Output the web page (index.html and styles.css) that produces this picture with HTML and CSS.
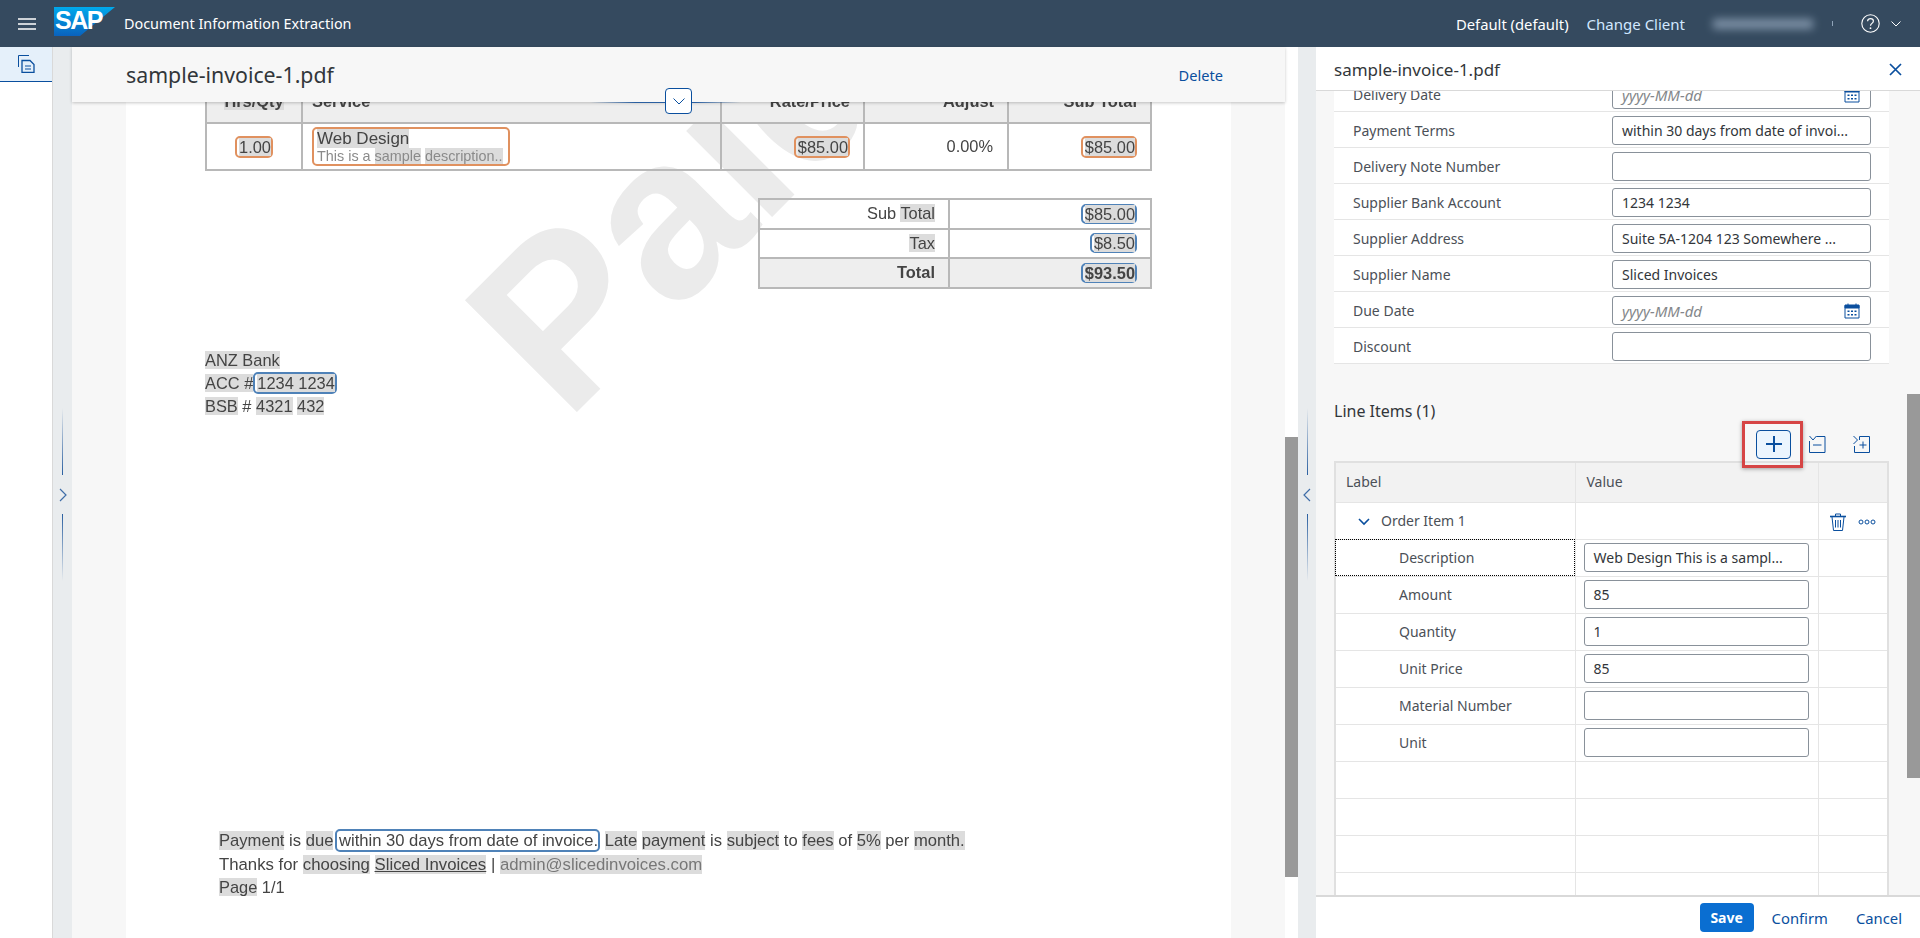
FILE: index.html
```html
<!DOCTYPE html>
<html lang="en">
<head>
<meta charset="utf-8">
<title>Document Information Extraction</title>
<link rel="stylesheet" href="styles.css">
</head>
<body>
<header class="shell">
  <svg class="burger" width="18" height="12" viewBox="0 0 18 12"><path d="M0 1h18M0 6h18M0 11h18" stroke="#fff" stroke-width="1.6"/></svg>
  <svg class="logo" width="61" height="29" viewBox="0 0 61 29">
    <defs><linearGradient id="sap" x1="0" y1="0" x2="0" y2="1"><stop offset="0" stop-color="#00a9ec"/><stop offset="1" stop-color="#0a62bd"/></linearGradient></defs>
    <polygon points="0,0 61,0 26,29 0,29" fill="url(#sap)"/>
    <text x="1" y="22" class="logo-text">SAP</text>
  </svg>
  <span class="app-title">Document Information Extraction</span>
  <span class="spacer"></span>
  <span class="client">Default (default)</span>
  <span class="change">Change Client</span>
  <span class="blurred" aria-hidden="true"></span>
  <span class="tick"></span>
  <svg class="help" width="19" height="19" viewBox="0 0 19 19"><circle cx="9.5" cy="9.5" r="8.7" fill="none" stroke="#fff" stroke-width="1.1"/><path d="M6.6 7.3c0-1.7 1.3-2.7 2.9-2.7s2.9 1 2.9 2.5c0 2.3-2.9 2.3-2.9 4.6" fill="none" stroke="#fff" stroke-width="1.2"/><circle cx="9.5" cy="14.2" r=".9" fill="#fff"/></svg>
  <svg class="caret" width="10" height="6" viewBox="0 0 10 6"><path d="M.5.5 5 5 9.5.5" fill="none" stroke="#fff"/></svg>
</header>

<main class="workspace">
  <nav class="rail">
    <div class="rail-tab">
      <svg width="17" height="18" viewBox="0 0 17 18" fill="none" stroke="#0a4f9e"><path d="M.5 12V.5H11"/><path d="M4 5.500h8l4 4v8H4z" stroke-width="1.300"/><path d="M7 11h6M7 14h6"/></svg>
    </div>
  </nav>

  <div class="splitter splitter-left">
    <span class="grip grip-up"></span>
    <svg class="grip-arrow" width="8" height="14" viewBox="0 0 8 14"><path d="M1 1l6 6-6 6" fill="none" stroke="#3f6ea8" stroke-width="1.200"/></svg>
    <span class="grip grip-down"></span>
  </div>

  <section class="doc-pane">
    <div class="doc-head">
      <h1 class="doc-title">sample-invoice-1.pdf</h1>
      <span class="link">Delete</span>
      <span class="collapse-line"></span>
      <button class="collapse-btn"><svg width="12" height="7" viewBox="0 0 12 7"><path d="M.5.500 6 6l5.500-5.500" fill="none" stroke="#0a4f9e"/></svg></button>
    </div>
    <div class="viewer">
      <div class="page">
        <svg class="watermark" width="1105" height="836"><text x="440" y="321" transform="rotate(-45 440 321)" class="watermark-text">Paid</text></svg>
        <div class="pdf">
          <table class="inv">
            <colgroup><col class="c1"><col class="c2"><col class="c3"><col class="c4"><col class="c5"></colgroup>
            <tr class="inv-head"><th class="ctr"><span class="hl">Hrs/Qty</span></th><th class="lft">Service</th><th>Rate/Price</th><th>Adjust</th><th>Sub Total</th></tr>
            <tr class="inv-row">
              <td class="ctr"><span class="box orange"><span class="hl">1.00</span></span></td>
              <td class="lft"><span class="box orange desc"><span class="hl big">Web Design</span><br><span class="small">This is a <span class="hl">sample</span> <span class="hl">description..</span></span></span></td>
              <td><span class="box orange"><span class="hl">$85.00</span></span></td>
              <td><span class="plain">0.00%</span></td>
              <td><span class="box orange"><span class="hl">$85.00</span></span></td>
            </tr>
          </table>
          <table class="totals">
            <tr><td class="t-label">Sub <span class="hl">Total</span></td><td><span class="box blue"><span class="hl">$85.00</span></span></td></tr>
            <tr><td class="t-label"><span class="hl">Tax</span></td><td><span class="box blue"><span class="hl">$8.50</span></span></td></tr>
            <tr class="grand"><td class="t-label">Total</td><td><span class="box blue"><span class="hl">$93.50</span></span></td></tr>
          </table>
          <div class="bank">
            <div><span class="hl">ANZ Bank</span></div>
            <div><span class="hl">ACC #</span><span class="box blue"><span class="hl">1234 1234</span></span></div>
            <div><span class="hl">BSB</span> # <span class="hl">4321</span> <span class="hl">432</span></div>
          </div>
          <div class="notes">
            <div class="note-a"><span class="hl">Payment</span> is <span class="hl">due</span> <span class="box blue wide">within 30 days from date of invoice.</span> <span class="hl">Late</span> <span class="hl">payment</span> is <span class="hl">subject</span> to <span class="hl">fees</span> of <span class="hl">5%</span> per <span class="hl">month.</span></div>
            <div class="note-b">Thanks for <span class="hl">choosing</span> <span class="under hl">Sliced Invoices</span> | <span class="hl mail">admin@slicedinvoices.com</span></div>
            <div><span class="hl">Page</span> 1/1</div>
          </div>
        </div>
      </div>
    </div>
  </section>

  <div class="doc-scroll"><span class="doc-thumb"></span></div>

  <div class="splitter splitter-right">
    <span class="grip grip-up"></span>
    <svg class="grip-arrow" width="8" height="14" viewBox="0 0 8 14"><path d="M7 1 1 7l6 6" fill="none" stroke="#3f6ea8" stroke-width="1.200"/></svg>
    <span class="grip grip-down"></span>
  </div>

  <aside class="side">
    <div class="side-head">
      <h2 class="side-title">sample-invoice-1.pdf</h2>
      <svg width="13" height="13" viewBox="0 0 13 13"><path d="M1 1l11 11M12 1 1 12" stroke="#0a4f9e" stroke-width="1.700"/></svg>
    </div>
    <div class="side-scroll">
      <div class="side-content">
        <div class="form">
          <div class="row"><label>Delivery Date</label><div class="field ph">yyyy-MM-dd<svg class="cal" width="16" height="16" viewBox="0 0 16 16"><path d="M1 2.500h14V15H1z" fill="none" stroke="#0a4f9e"/><path d="M1 2h14v3H1zM4 .5v2M12 .5v2" fill="#0a4f9e" stroke="#0a4f9e"/><path d="M3.500 7.500h2v1.500h-2zM7 7.500h2v1.500H7zM10.500 7.500h2v1.500h-2zM3.500 11h2v1.500h-2zM7 11h2v1.500H7zM10.500 11h2v1.500h-2z" fill="#0a4f9e"/></svg></div></div>
          <div class="row"><label>Payment Terms</label><div class="field">within 30 days from date of invoi...</div></div>
          <div class="row"><label>Delivery Note Number</label><div class="field"></div></div>
          <div class="row"><label>Supplier Bank Account</label><div class="field">1234 1234</div></div>
          <div class="row"><label>Supplier Address</label><div class="field">Suite 5A-1204 123 Somewhere ...</div></div>
          <div class="row"><label>Supplier Name</label><div class="field">Sliced Invoices</div></div>
          <div class="row"><label>Due Date</label><div class="field ph">yyyy-MM-dd<svg class="cal" width="16" height="16" viewBox="0 0 16 16"><path d="M1 2.500h14V15H1z" fill="none" stroke="#0a4f9e"/><path d="M1 2h14v3H1zM4 .5v2M12 .5v2" fill="#0a4f9e" stroke="#0a4f9e"/><path d="M3.500 7.500h2v1.500h-2zM7 7.500h2v1.500H7zM10.500 7.500h2v1.500h-2zM3.500 11h2v1.500h-2zM7 11h2v1.500H7zM10.500 11h2v1.500h-2z" fill="#0a4f9e"/></svg></div></div>
          <div class="row"><label>Discount</label><div class="field"></div></div>
        </div>

        <h3 class="items-title">Line Items (1)</h3>
        <div class="toolbar">
          <div class="add-wrap">
            <span class="callout"></span>
            <button class="add"><svg width="16" height="16" viewBox="0 0 16 16"><path d="M8 0v16M0 8h16" stroke="#0a4f9e" stroke-width="2"/></svg></button>
          </div>
          <svg class="tool-a" width="17" height="17" viewBox="0 0 17 17" fill="none" stroke="#0a4f9e"><path d="M.5 5v11.500h15.500V.5H7.500"/><path d="M.5 0 4 4 7.500 0"/><path d="M4 9h8.500"/></svg>
          <svg class="tool-b" width="17" height="17" viewBox="0 0 17 17" fill="none" stroke="#0a4f9e"><path d="M1.500 10v6.500h15V.5H6.500V4"/><path d="M.5 0 4.500 4 .5 8"/><path d="M6.500 9h7M10 5.500v7"/></svg>
        </div>
        <table class="items">
          <colgroup><col class="i1"><col class="i2"><col class="i3"></colgroup>
          <tr class="items-head"><th>Label</th><th>Value</th><th></th></tr>
          <tr><td class="group"><svg width="12" height="8" viewBox="0 0 12 8"><path d="M1 1l5 5 5-5" fill="none" stroke="#0a4f9e" stroke-width="1.600"/></svg>Order Item 1</td><td></td>
            <td class="acts"><svg width="16" height="18" viewBox="0 0 16 18" fill="none" stroke="#0a4f9e"><path d="M0 3.500h16" stroke-width="1.600"/><path d="M5.500 3V1h5v2"/><path d="M2 4l1.500 13.500h9L14 4"/><path d="M5.500 7v7.500M8 7v7.500M10.500 7v7.500"/></svg><svg width="18" height="6" viewBox="0 0 18 6" fill="none" stroke="#0a4f9e"><circle cx="3" cy="3" r="2"/><circle cx="9" cy="3" r="2"/><circle cx="15" cy="3" r="2"/></svg></td></tr>
          <tr><td class="child focus">Description</td><td class="val"><div class="field">Web Design This is a sampl...</div></td><td></td></tr>
          <tr><td class="child">Amount</td><td class="val"><div class="field">85</div></td><td></td></tr>
          <tr><td class="child">Quantity</td><td class="val"><div class="field">1</div></td><td></td></tr>
          <tr><td class="child">Unit Price</td><td class="val"><div class="field">85</div></td><td></td></tr>
          <tr><td class="child">Material Number</td><td class="val"><div class="field"></div></td><td></td></tr>
          <tr><td class="child">Unit</td><td class="val"><div class="field"></div></td><td></td></tr>
          <tr><td></td><td></td><td></td></tr>
          <tr><td></td><td></td><td></td></tr>
          <tr><td></td><td></td><td></td></tr>
          <tr><td></td><td></td><td></td></tr>
        </table>
      </div>
      <span class="side-thumb"></span>
    </div>
    <div class="side-foot">
      <button class="save">Save</button>
      <span class="link">Confirm</span>
      <span class="link">Cancel</span>
    </div>
  </aside>
</main>
</body>
</html>
```

FILE: styles.css
```css
* { box-sizing: border-box; }
html, body { height: 100%; }
body {
  margin: 0;
  height: 938px;
  overflow: hidden;
  display: flex;
  flex-direction: column;
  font-family: "Noto Sans", "Open Sans", sans-serif;
  font-size: 14px;
  color: #32363a;
  background: #fff;
}
h1, h2, h3 { margin: 0; font-weight: 400; }

/* Shell bar */
.shell {
  height: 47px;
  flex: none;
  background: #354a5f;
  display: flex;
  align-items: center;
  color: #fff;
  padding-left: 18px;
}
.burger { margin-right: 18px; }
.logo { margin-right: 9px; margin-top: -4px; }
.logo-text { font: bold 25px "Liberation Sans", sans-serif; fill: #fff; letter-spacing: -1.500px; }
.app-title { font-size: 14.400px; }
.spacer { flex: 1; }
.client { font-size: 14.800px; }
.change { color: #d1e8ff; margin-left: 18px; font-size: 15px; }
.blurred { width: 100px; height: 10px; background: #8fa3b8; filter: blur(4px); margin-left: 28px; opacity: .8; }
.tick { width: 1px; height: 5px; background: #8fa3b8; margin-left: 19px; }
.help { margin-left: 28px; }
.caret { margin-left: 11px; margin-right: 19px; }

/* Layout */
.workspace { flex: 1; display: flex; min-height: 0; }
.rail { width: 53px; flex: none; background: #fff; border-right: 1px solid #d9d9d9; }
.rail-tab {
  height: 35px;
  background: #e5f0fa;
  border-bottom: 1px solid #0a4f9e;
  display: flex;
  justify-content: center;
  align-items: center;
}
.splitter {
  flex: none;
  display: flex;
  flex-direction: column;
  align-items: center;
  background: #e9ecee;
  padding-top: 361px;
}
.splitter-left { width: 19px; }
.splitter-right { width: 18px; }
.grip { width: 1px; height: 67px; }
.grip-up { background: linear-gradient(to bottom, transparent, #2a5fa0); }
.grip-down { background: linear-gradient(to top, transparent, #2a5fa0); }
.grip-arrow { margin: 13px 0 12px; }

/* Document */
.doc-pane { width: 1213px; flex: none; display: flex; flex-direction: column; background: #f7f7f7; position: relative; min-height: 0; }
.doc-head {
  height: 55px;
  flex: none;
  background: #f7f7f7;
  padding: 0 62px 0 54px;
  display: flex;
  align-items: center;
  justify-content: space-between;
  position: relative;
  z-index: 2;
  box-shadow: 0 1px 3px rgba(0,0,0,.22);
}
.doc-title { font-size: 21.300px; }
.link { color: #0a4f9e; }
.doc-head .link { font-size: 14.600px; }
.collapse-line { position: absolute; left: 518px; width: 151px; bottom: -1px; height: 1px; background: linear-gradient(to right, transparent, #2a5fa0 30%, #2a5fa0 70%, transparent); }
.collapse-btn {
  position: absolute;
  left: 593px;
  top: 41px;
  width: 27px;
  height: 26px;
  padding: 0;
  border: 1px solid #0a4f9e;
  border-radius: 4px;
  background: #fff;
  display: flex;
  align-items: center;
  justify-content: center;
}
.viewer { flex: 1; overflow: hidden; padding-left: 54px; min-height: 0; }
.page { width: 1105px; height: 836px; background: #fff; position: relative; overflow: hidden; }
.watermark { position: absolute; left: 0; top: 0; }
.watermark-text { font: bold 230px "Liberation Sans", sans-serif; fill: #ebebeb; letter-spacing: -3px; }
.pdf { position: absolute; inset: 0; font: 16.4px "Liberation Sans", sans-serif; color: #444; filter: blur(.35px); }
.hl { background: #dcdcdc; }
.box { display: inline-block; border: 2px solid; border-radius: 5px; padding: 0 0 0 2px; line-height: 18px; }
.orange { border-color: #e0915f; }
.blue { border-color: #4f82b8; }
.inv, .totals { position: absolute; border-collapse: collapse; table-layout: fixed; }
.inv { left: 79px; top: -20px; width: 945px; }
.inv td, .inv th, .totals td { border: 2px solid #b8b8b8; text-align: right; padding: 0 13px; }
.inv .ctr { text-align: center; }
.inv .lft { text-align: left; padding-left: 9px; }
.c1 { width: 96px; } .c2 { width: 419px; } .c3 { width: 143px; } .c4 { width: 144px; } .c5 { width: 143px; }
.inv-head { height: 40px; background: #eee; }
.inv-head th { vertical-align: top; padding-top: 8px; font-weight: 700; color: #444; background: rgba(238,238,238,.8); }
.inv-row { height: 47px; }
.plain { color: #444; margin-right: 1px; }
.desc { width: 198px; padding: 1px 0 0 3px; line-height: 17px; height: 39px; white-space: nowrap; vertical-align: middle; }
.big { font-size: 17px; }
.small { font-size: 14.400px; color: #8a8a8a; }
.totals { left: 632px; top: 96px; width: 394px; }
.totals td:first-child { width: 190px; }
.totals tr { height: 29.6px; }
.grand { background: #eee; font-weight: 700; }
.totals .box { line-height: 16px; }
.bank { position: absolute; left: 79px; top: 247px; line-height: 23px; }
.notes { position: absolute; left: 93px; top: 727px; line-height: 23.500px; white-space: nowrap; }
.note-a { font-size: 16.600px; }
.note-b { font-size: 16.750px; }
.wide { margin-left: -3px; padding: 0 0 0 2px; line-height: 19px; }
.under { text-decoration: underline; }
.mail { color: #777; }

.doc-scroll { width: 13px; flex: none; background: #fff; }
.doc-thumb { display: block; margin-top: 390px; height: 440px; background: #999; }

/* Side panel */
.side { flex: 1; min-width: 0; display: flex; flex-direction: column; background: #f7f7f7; }
.side-head {
  height: 44px;
  flex: none;
  background: #fff;
  border-bottom: 1px solid #d9d9d9;
  padding: 2px 18px 0;
  display: flex;
  align-items: center;
  justify-content: space-between;
  position: relative;
  z-index: 1;
}
.side-title { font-size: 17px; }
.side-scroll { flex: 1; overflow: hidden; position: relative; min-height: 0; }
.side-content { margin-top: -15px; padding: 0 31px 0 18px; }
.side-thumb { position: absolute; right: 0; top: 303px; width: 13px; height: 384px; background: #999; }
.form { background: #fff; }
.row {
  height: 36px;
  display: flex;
  align-items: center;
  justify-content: space-between;
  padding: 2px 18px 0 19px;
  border-bottom: 1px solid #e5e5e5;
  color: #4b5057;
}
.field {
  width: 259px;
  height: 29px;
  border: 1px solid #89919a;
  border-radius: 3px;
  background: #fff;
  display: flex;
  align-items: center;
  justify-content: space-between;
  padding: 0 9px;
  white-space: nowrap;
  color: #32363a;
}
.ph { font-style: italic; font-size: 15px; color: #84878a; }
.cal { margin-right: 1px; }
.items-title { font-size: 16px; line-height: 22px; margin-top: 36px; }
.toolbar { height: 39px; display: flex; align-items: center; justify-content: flex-end; padding: 8px 19px 3px 0; }
.add-wrap { position: relative; }
.callout { position: absolute; left: -14px; top: -9px; width: 61px; height: 47px; border: 3px solid #d64545; box-shadow: 0 1px 4px rgba(0,0,0,.35); }
.add {
  display: flex;
  align-items: center;
  justify-content: center;
  width: 35px;
  height: 29px;
  padding: 0;
  border: 1px solid #0a4f9e;
  border-radius: 4px;
  background: #ebf5fe;
}
.tool-a { margin-left: 18px; }
.tool-b { margin-left: 27px; }
.items { width: 553px; border-collapse: collapse; table-layout: fixed; background: #fff; border: 2px solid #e0e0e0; }
.i1 { width: 240px; } .i2 { width: 243px; } .i3 { width: 70px; }
.items td, .items th { border: 1px solid #e5e5e5; height: 37px; padding: 0; }
.items-head th { height: 40px; background: #f2f2f2; font-weight: 400; text-align: left; padding: 0 0 2px 10px; color: #4b5057; }
.items-head th + th { padding-left: 11px; }
.group svg { margin: 0 11px 0 22px; }
.child { padding-left: 63px !important; color: #4b5057; }
.group { color: #4b5057; }
.focus { outline: 1px dotted #000; outline-offset: -1px; }
.val { padding-left: 8px !important; }
.val .field { width: 225px; }
.acts { white-space: nowrap; padding-left: 11px !important; }
.acts svg { vertical-align: middle; }
.acts svg + svg { margin-left: 12px; }
.side-foot {
  height: 43px;
  flex: none;
  background: #fff;
  border-top: 2px solid #d9d9d9;
  display: flex;
  align-items: center;
  justify-content: flex-end;
  padding-right: 18px;
  gap: 18px;
  font-size: 14.800px;
}
.save {
  width: 54px;
  height: 29px;
  border: 0;
  border-radius: 4px;
  background: #0a6ed1;
  color: #fff;
  font: 700 14px "Noto Sans", sans-serif;
  padding: 0;
}
.side-foot .link + .link { margin-left: 10px; }
```
